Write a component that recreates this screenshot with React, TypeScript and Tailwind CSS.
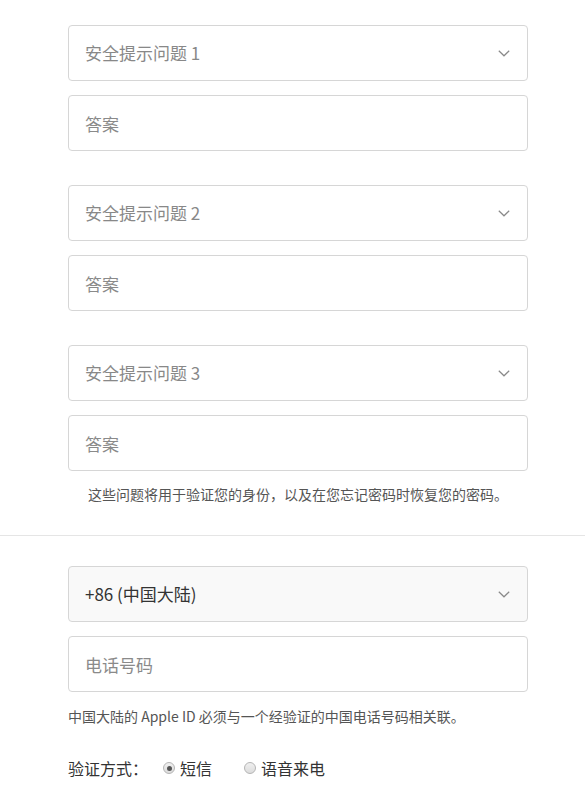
import React from 'react';

const font = { fontFamily: '"Noto Sans CJK SC", "Liberation Sans", sans-serif' };

function Chevron() {
  return (
    <svg width="12" height="7" viewBox="0 0 12 7" fill="none">
      <polyline points="0.8,0.8 6,5.8 11.2,0.8" stroke="#8a8a8a" strokeWidth="1.2" />
    </svg>
  );
}

function SelectBox({ label, dark }: { label: string; dark?: boolean }) {
  return (
    <div
      className={`flex h-[56px] items-center justify-between rounded-[4px] border border-[#d6d6d6] pl-[16px] pr-[17px] text-[17px] ${
        dark ? 'bg-[#f9f9f9] text-[#333]' : 'bg-white text-[#888]'
      }`}
    >
      <span>{label}</span>
      <Chevron />
    </div>
  );
}

function InputBox({ placeholder }: { placeholder: string }) {
  return (
    <input
      type="text"
      placeholder={placeholder}
      className="block h-[56px] w-full rounded-[4px] border border-[#d6d6d6] bg-white px-[16px] text-[17px] text-[#333] placeholder:text-[#8a8a8a] focus:outline-none"
      style={font}
    />
  );
}

function Radio({ checked, label }: { checked?: boolean; label: string }) {
  return (
    <label className="flex items-center gap-[5px]">
      <span className="flex h-[12px] w-[12px] items-center justify-center rounded-full border border-[#b5b5b5] bg-gradient-to-b from-[#f0f0f0] to-[#dcdcdc]">
        {checked && <span className="h-[5px] w-[5px] rounded-full bg-[#555]" />}
      </span>
      <span>{label}</span>
    </label>
  );
}

export default function App() {
  const questions = ['安全提示问题 1', '安全提示问题 2', '安全提示问题 3'];

  return (
    <div className="min-h-[801px] w-[585px] bg-white" style={font}>
      <div className="px-[68px] pt-[25px]">
        <div className="w-[460px]">
          {questions.map((q, i) => (
            <div key={q} className={i > 0 ? 'mt-[34px]' : ''}>
              <SelectBox label={q} />
              <div className="mt-[14px]">
                <InputBox placeholder="答案" />
              </div>
            </div>
          ))}
          <p className="mt-[13px] text-center text-[14px] leading-[20px] text-[#555]">
            这些问题将用于验证您的身份，以及在您忘记密码时恢复您的密码。
          </p>
        </div>
      </div>

      <div className="mt-[31px] h-px w-full bg-[#e5e5e5]" />

      <div className="px-[68px] pt-[30px]">
        <div className="w-[460px]">
          <SelectBox label="+86 (中国大陆)" dark />
          <div className="mt-[14px]">
            <InputBox placeholder="电话号码" />
          </div>
          <p className="mt-[14px] text-[14px] leading-[20px] text-[#555]">
            中国大陆的 Apple ID 必须与一个经验证的中国电话号码相关联。
          </p>
          <div className="mt-[30px] flex items-center text-[16px] leading-[24px] text-[#333]">
            <span className="w-[95px]">验证方式：</span>
            <Radio checked label="短信" />
            <div className="ml-[32px]">
              <Radio label="语音来电" />
            </div>
          </div>
        </div>
      </div>
    </div>
  );
}
